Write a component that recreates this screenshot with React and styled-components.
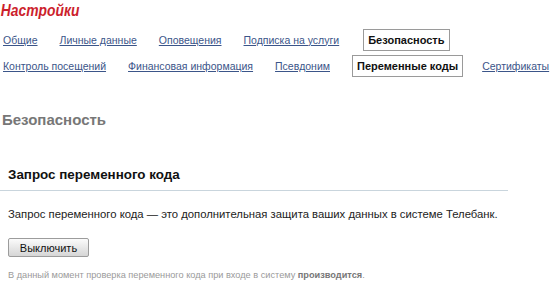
import React from "react";
import styled, { createGlobalStyle } from "styled-components";

const Global = createGlobalStyle`
  html, body { margin: 0; padding: 0; background: #fff; }
  body { font-family: "Liberation Sans", Arial, sans-serif; color: #222; }
`;

const Page = styled.div`
  width: 550px;
  height: 282px;
  overflow: hidden;
  display: flex;
  flex-direction: column;
`;

const Title = styled.h1`
  margin: 0;
  padding: 0 0 0 1px;
  font-family: "Liberation Sans", Arial, sans-serif;
  font-size: 16.5px;
  line-height: 20px;
  font-weight: bold;
  font-style: italic;
  color: #cc1f2d;
  transform: scaleX(0.84);
  transform-origin: left center;
`;

const Nav = styled.div`
  display: flex;
  flex-direction: column;
  margin-top: 8px;
  gap: 3px;
`;

const NavRow = styled.div`
  display: flex;
  align-items: center;
  gap: 22px;
  padding-left: 3px;
  height: 23px;
`;

const NavLink = styled.a`
  font-size: 10.5px;
  color: #3b5589;
  text-decoration: underline;
  white-space: nowrap;
  cursor: pointer;
`;

const NavActive = styled.span`
  font-size: 11px;
  font-weight: bold;
  color: #111;
  border: 1px solid #9a9a9a;
  padding: 4px 4px;
  margin: ${(p) => (p.$wide ? "0 -3px 0 0" : "0 -2px 0 2px")};
  white-space: nowrap;
`;

const SectionHeading = styled.h2`
  margin: 34px 0 0 2px;
  font-size: 15px;
  line-height: 18px;
  font-weight: bold;
  color: #777;
`;

const Block = styled.div`
  margin-top: 37px;
  width: 508px;
`;

const BlockTitle = styled.h3`
  margin: 0;
  padding: 0 0 7px 8px;
  font-size: 13.4px;
  line-height: 17px;
  font-weight: bold;
  color: #111;
  border-bottom: 1px solid #c9d5dd;
`;

const Text = styled.p`
  margin: 16px 0 0 8px;
  font-size: 11.3px;
  line-height: 14px;
  color: #222;
  white-space: nowrap;
`;

const Button = styled.button`
  margin: 17px 0 0 8px;
  width: 81px;
  height: 19px;
  padding: 0;
  font-family: "Liberation Sans", Arial, sans-serif;
  font-size: 11px;
  color: #111;
  border: 1px solid #9c9c9c;
  border-radius: 2px;
  background: linear-gradient(#fbfbfb, #e6e6e6 55%, #d6d6d6);
  align-self: flex-start;
`;

const Note = styled.p`
  margin: 12px 0 0 8px;
  font-size: 9.2px;
  line-height: 12px;
  color: #9a9a9a;
  white-space: nowrap;
`;

const Strong = styled.b`
  color: #777;
`;

export default function App() {
  return (
    <Page>
      <Global />
      <Title>Настройки</Title>
      <Nav>
        <NavRow>
          <NavLink>Общие</NavLink>
          <NavLink>Личные данные</NavLink>
          <NavLink>Оповещения</NavLink>
          <NavLink>Подписка на услуги</NavLink>
          <NavActive>Безопасность</NavActive>
        </NavRow>
        <NavRow>
          <NavLink>Контроль посещений</NavLink>
          <NavLink>Финансовая информация</NavLink>
          <NavLink>Псевдоним</NavLink>
          <NavActive $wide>Переменные коды</NavActive>
          <NavLink>Сертификаты</NavLink>
        </NavRow>
      </Nav>
      <SectionHeading>Безопасность</SectionHeading>
      <Block>
        <BlockTitle>Запрос переменного кода</BlockTitle>
      </Block>
      <Text>
        Запрос переменного кода — это дополнительная защита ваших данных в системе Телебанк.
      </Text>
      <Button>Выключить</Button>
      <Note>
        В данный момент проверка переменного кода при входе в систему <Strong>производится</Strong>.
      </Note>
    </Page>
  );
}
